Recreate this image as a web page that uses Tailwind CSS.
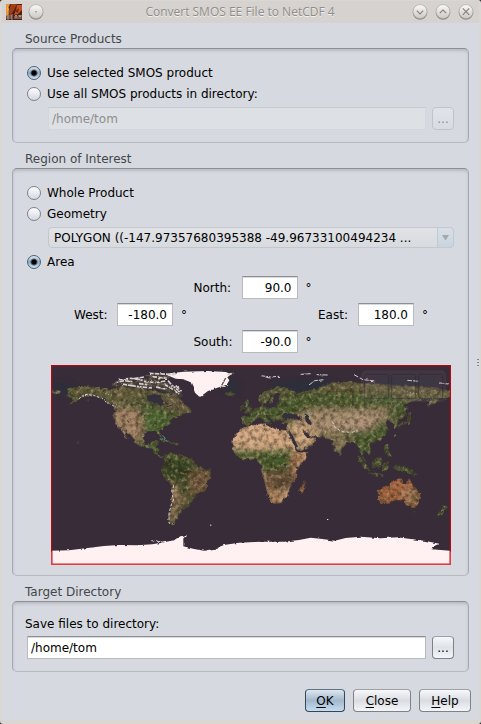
<!DOCTYPE html>
<html lang="en">
<head>
<meta charset="utf-8">
<meta name="viewport" content="width=device-width, initial-scale=1">
<title>Convert SMOS EE File to NetCDF 4</title>
<script src="https://cdn.jsdelivr.net/npm/@tailwindcss/browser@4"></script>
</head>
<body class="bg-[#2b2b30]">
<div class="relative flex min-h-screen flex-col overflow-hidden rounded-[3px] border-x-2 border-b-4 border-t border-[#dad6d2] bg-[#d6d9df] font-['DejaVu_Sans',sans-serif] text-[12px] leading-4 text-black">

  <!-- Title bar -->
  <header class="flex h-[22px] items-center bg-[#d6d2cf] pl-1 pr-[5px]">
    <svg class="size-4" viewBox="0 0 16 16" role="img" aria-label="BEAM">
      <rect width="16" height="16" fill="#4a2117"/>
      <path d="M0 0h4L2 5l1 5-3 2z" fill="#e39a32"/>
      <path d="M5 0h6L8 6 4 12 3 7z" fill="#a43d16"/>
      <path d="M11 1h5v5l-4 4-4 1 2-5z" fill="#c4511d"/>
      <path d="M1 2l2 3-1 4z" fill="#f1c36b"/>
      <path d="M9 7l4-3-1 5z" fill="#742a15"/>
      <path d="M1 15v-4h2v4zM1 13h2M5 15v-4h2M5 13h2M5 15h2M9 15v-3l1-1 1 1v3M9 13h2M13 15v-4l1 2 1-2v4" fill="none" stroke="#d3bcae" stroke-width=".7"/>
    </svg>
    <button aria-label="Window menu" class="ml-[6px]">
      <svg class="size-4" viewBox="0 0 16 16"><defs><linearGradient id="knob" x1="0" y1="0" x2="0" y2="1"><stop offset="0" stop-color="#fafaf9"/><stop offset="1" stop-color="#cbc8c5"/></linearGradient></defs><circle cx="8" cy="8.6" r="7.200" fill="#8d8a87"/><circle cx="8" cy="7.6" r="7" fill="url(#knob)" stroke="#a3a09d" stroke-width=".6"/><circle cx="8" cy="7.8" r=".8" fill="#8a8784"/></svg>
    </button>
    <h1 class="flex-1 pl-6 text-center font-['Open_Sans',sans-serif] text-[12px] text-[#8f8c89] [text-shadow:0_1px_0_#f2f0ee]">Convert SMOS EE File to NetCDF 4</h1>
    <div class="flex gap-[7px]">
      <button aria-label="Minimize"><svg class="size-4" viewBox="0 0 16 16"><circle cx="8" cy="8.6" r="7.200" fill="#8d8a87"/><circle cx="8" cy="7.6" r="7" fill="url(#knob)" stroke="#a3a09d" stroke-width=".6"/><path d="M4.800 6.6l3.200 3.200 3.200-3.200" fill="none" stroke="#85827f" stroke-width="1.2"/></svg></button>
      <button aria-label="Maximize"><svg class="size-4" viewBox="0 0 16 16"><circle cx="8" cy="8.6" r="7.200" fill="#8d8a87"/><circle cx="8" cy="7.6" r="7" fill="url(#knob)" stroke="#a3a09d" stroke-width=".6"/><path d="M4.800 9.200l3.200-3.200 3.200 3.200" fill="none" stroke="#85827f" stroke-width="1.2"/></svg></button>
      <button aria-label="Close window"><svg class="size-4" viewBox="0 0 16 16"><circle cx="8" cy="8.6" r="7.200" fill="#8d8a87"/><circle cx="8" cy="7.6" r="7" fill="url(#knob)" stroke="#a3a09d" stroke-width=".6"/><path d="M4.800 4.400l6.400 6.400M11.200 4.400l-6.400 6.400" fill="none" stroke="#85827f" stroke-width="1.2"/></svg></button>
    </div>
  </header>

  <main class="flex flex-col px-[10px] pt-2">
    <!-- Source products -->
    <h2 class="pl-[13px] text-[#43464b]">Source Products</h2>
    <section class="mt-px rounded-[5px] border border-x-[#a6a9ae] border-b-[#b6b9be] border-t-[#8c8f94] px-[14px] pb-3 pt-[13px] shadow-[inset_0_2px_3px_#b9bcc1]">
      <label class="flex h-[21px] items-center gap-[6px]"><input type="radio" name="source" checked class="size-[14px] appearance-none rounded-full border border-[#6d7580] bg-linear-to-b from-[#fdfdfe] to-[#d5d8df] checked:border-[#46607a] checked:bg-[radial-gradient(circle,#000_2px,transparent_4px),linear-gradient(#dfe9f2,#8fabc4_50%,#cfe2f2)]">Use selected SMOS product</label>
      <label class="flex h-[21px] items-center gap-[6px]"><input type="radio" name="source" class="size-[14px] appearance-none rounded-full border border-[#7b828c] bg-linear-to-b from-[#fdfdfe] to-[#d5d8df]">Use all SMOS products in directory:</label>
      <div class="mt-[3px] flex gap-[6px] pl-[21px]">
        <input type="text" aria-label="Source directory" disabled value="/home/tom" class="h-[23px] min-w-0 flex-1 border border-[#d3d6da] border-t-[#c6cacf] bg-[#dde0e4] px-[3px] text-[#8e8f91]">
        <button disabled aria-label="Browse source directory" class="h-[23px] w-[22px] rounded-[4px] border border-[#bfc4cc] bg-linear-to-b from-[#e1e3e8] to-[#d7dce2] text-[#8e8f91]">...</button>
      </div>
    </section>

    <!-- Region of interest -->
    <h2 class="mt-2 pl-[13px] text-[#43464b]">Region of Interest</h2>
    <section class="mt-px rounded-[5px] border border-x-[#a6a9ae] border-b-[#b6b9be] border-t-[#8c8f94] px-[14px] pb-[10px] pt-[13px] shadow-[inset_0_2px_3px_#b9bcc1]">
      <label class="flex h-[21px] items-center gap-[6px]"><input type="radio" name="region" class="size-[14px] appearance-none rounded-full border border-[#7b828c] bg-linear-to-b from-[#fdfdfe] to-[#d5d8df]">Whole Product</label>
      <label class="flex h-[21px] items-center gap-[6px]"><input type="radio" name="region" class="size-[14px] appearance-none rounded-full border border-[#7b828c] bg-linear-to-b from-[#fdfdfe] to-[#d5d8df]">Geometry</label>
      <div class="relative ml-[21px] mt-[3px]">
        <select aria-label="Geometry" class="block h-[21px] w-full appearance-none rounded-[4px] border border-[#c3c8cf] bg-linear-to-b from-[#e1e3e7] to-[#d7dade] pl-[5px] pr-5 text-black"><option>POLYGON ((-147.97357680395388 -49.96733100494234 ...</option></select>
        <span class="pointer-events-none absolute inset-y-0 right-0 flex w-[17px] items-center justify-center rounded-r-[4px] border border-[#c1c9d2] bg-linear-to-b from-[#d8dfe6] to-[#cbd4de]"><svg class="h-[6px] w-2" viewBox="0 0 8 6"><path d="M0 0h7L3.500 5.500z" fill="#a3a8ae"/></svg></span>
      </div>
      <label class="mt-[3px] flex h-[21px] items-center gap-[6px]"><input type="radio" name="region" checked class="size-[14px] appearance-none rounded-full border border-[#6d7580] bg-linear-to-b from-[#fdfdfe] to-[#d5d8df] checked:border-[#46607a] checked:bg-[radial-gradient(circle,#000_2px,transparent_4px),linear-gradient(#dfe9f2,#8fabc4_50%,#cfe2f2)]">Area</label>

      <div class="mt-1 flex flex-col gap-1 pl-6 pr-[3px]">
        <div class="flex items-center justify-center gap-2 pl-[3px]">
          <label for="north" class="w-10">North:</label>
          <input id="north" value="90.0" class="h-[23px] w-14 border border-[#b9bbbf] border-t-[#8c8f94] bg-white px-[5px] text-right shadow-[inset_0_1px_0_#d8d9db]"><span>°</span>
        </div>
        <div class="flex items-center justify-between px-[23px]">
          <div class="flex items-center gap-2"><label for="west" class="w-[35px]">West:</label><input id="west" value="-180.0" class="h-[23px] w-14 border border-[#b9bbbf] border-t-[#8c8f94] bg-white px-[5px] text-right shadow-[inset_0_1px_0_#d8d9db]"><span>°</span></div>
          <div class="flex items-center gap-2"><label for="east" class="w-8">East:</label><input id="east" value="180.0" class="h-[23px] w-14 border border-[#b9bbbf] border-t-[#8c8f94] bg-white px-[5px] text-right shadow-[inset_0_1px_0_#d8d9db]"><span>°</span></div>
        </div>
        <div class="flex items-center justify-center gap-2 pl-[3px]">
          <label for="south" class="w-10">South:</label>
          <input id="south" value="-90.0" class="h-[23px] w-14 border border-[#b9bbbf] border-t-[#8c8f94] bg-white px-[5px] text-right shadow-[inset_0_1px_0_#d8d9db]"><span>°</span>
        </div>
      </div>

      <!-- World map -->
      <div class="ml-6 mr-[3px] mt-3">
        <svg class="block aspect-2/1 w-full" viewBox="18 15 1200 600" role="img" aria-label="World map with selected area">
          <defs>
            <filter id="rough" x="0" y="0" width="1" height="1" filterUnits="objectBoundingBox" color-interpolation-filters="sRGB">
              <feTurbulence type="fractalNoise" baseFrequency=".08" numOctaves="3" seed="4" result="n"/>
              <feColorMatrix in="n" values="1 0 0 0 0  0 1 0 0 0  0 0 1 0 0  0 0 0 0 1" result="m"/>
              <feDisplacementMap in="SourceGraphic" in2="m" scale="14" xChannelSelector="R" yChannelSelector="G" result="d"/>
              <feTurbulence type="fractalNoise" baseFrequency=".07" numOctaves="4" seed="9"/>
              <feColorMatrix values="0 0 0 0 .15  0 0 0 0 .12  0 0 0 0 .07  1.300 0 0 0 -.5"/>
              <feComposite in2="d" operator="in" result="s"/>
              <feTurbulence type="fractalNoise" baseFrequency=".09" numOctaves="3" seed="21"/>
              <feColorMatrix values="0 0 0 0 .82  0 0 0 0 .7  0 0 0 0 .55  0 1.400 0 0 -.68"/>
              <feComposite in2="d" operator="in" result="h"/>
              <feMerge><feMergeNode in="d"/><feMergeNode in="s"/><feMergeNode in="h"/></feMerge>
            </filter>
            <filter id="edge" filterUnits="userSpaceOnUse" x="18" y="15" width="1200" height="600"><feTurbulence type="fractalNoise" baseFrequency=".08" numOctaves="2" seed="2"/><feColorMatrix values="1 0 0 0 0  0 1 0 0 0  0 0 1 0 0  0 0 0 0 1"/><feDisplacementMap in="SourceGraphic" scale="12" xChannelSelector="R" yChannelSelector="G" color-interpolation-filters="sRGB"/></filter>
            <filter id="soft"><feGaussianBlur stdDeviation="9"/></filter>
            <clipPath id="na"><path id="naP" d="M62 87L85 80 112 78 150 82 205 88 225 80 260 82 300 88 345 94 400 112 415 128 438 150 440 158 420 160 407 168 388 172 375 188 358 200 345 212 351 228 347 235 336 216 318 214 300 220 293 237 301 251 317 251 324 240 341 240 331 262 342 267 341 283 356 291 348 294 332 279 310 264 278 255 265 236 243 212 235 203 250 238 244 235 226 204 211 192 205 165 212 150 202 133 178 120 145 107 115 111 90 127 58 141 85 122 76 113 66 110 72 98z"/></clipPath>
            <clipPath id="sa"><path id="saP" d="M360 283L378 275 385 282 420 287 445 298 460 319 498 331 500 342 486 365 485 388 455 402 447 422 432 438 408 448 411 458 397 465 401 475 388 483 385 498 373 490 371 465 379 435 383 398 380 375 362 360 348 333 356 312z"/></clipPath>
            <clipPath id="af"><path id="afP" d="M587 205L615 196 652 190 672 200 700 208 727 211 744 249 759 277 787 277 785 292 755 326 752 360 733 380 727 410 710 427 681 432 668 402 659 366 650 336 648 315 630 297 596 299 575 287 562 269 563 238z"/></clipPath>
            <clipPath id="eu"><path id="euP" d="M590 170L610 170 618 163 606 155 630 149 647 138 652 128 662 144 690 141 703 124 714 122 700 120 706 96 690 102 686 118 675 133 668 127 650 130 638 122 642 107 670 88 700 78 730 86 760 100 785 91 815 88 840 75 875 68 915 64 950 70 985 70 1050 76 1110 80 1160 84 1218 93 1218 110 1185 120 1161 132 1152 145 1148 134 1162 116 1120 120 1090 128 1075 135 1087 140 1085 160 1073 175 1059 184 1057 203 1044 205 1043 186 1025 182 1021 192 1028 203 1024 222 1004 241 974 250 981 269 969 286 960 271 953 284 966 312 955 302 947 282 936 254 919 242 899 256 886 275 886 292 871 271 859 242 835 230 800 228 774 211 783 230 815 235 806 255 763 272 748 247 728 211 724 199 735 193 710 190 713 180 737 173 768 183 770 170 750 163 737 162 720 171 712 184 694 181 688 190 676 174 662 165 679 187 667 193 646 171 635 174 616 192 603 196 590 190z"/></clipPath>
            <clipPath id="au"><path id="auP" d="M1000 389L1021 381 1044 366 1064 354 1073 357 1070 365 1085 373 1092 354 1105 377 1124 396 1127 411 1117 436 1101 443 1083 435 1075 421 1048 420 1031 427 1003 430 997 405z"/></clipPath>
          </defs>
          <rect x="18" y="15" width="1200" height="600" fill="#372c38"/>
          <g fill="#1f3441" opacity=".45" filter="url(#soft)"><ellipse cx="50" cy="85" rx="40" ry="14"/><ellipse cx="780" cy="76" rx="100" ry="14"/><ellipse cx="1090" cy="65" rx="100" ry="8"/><ellipse cx="560" cy="80" rx="25" ry="16"/><ellipse cx="345" cy="123" rx="28" ry="18"/></g>

          <g filter="url(#rough)">
            <g clip-path="url(#na)"><use href="#naP" fill="#525a37"/><g filter="url(#soft)"><path d="M50 70H300V115L215 130 160 100 80 115z" fill="#655e3c"/><path d="M205 140L280 145 295 185 290 230 270 260 210 210z" fill="#a58567"/><path d="M295 145L390 150 370 190 340 215 300 210z" fill="#4c6733"/><path d="M300 90L440 120 430 158 360 150z" fill="#695d44"/><path d="M270 235L310 260 350 290 340 230z" fill="#4e6332"/></g></g>
            <g clip-path="url(#sa)"><use href="#saP" fill="#4b5430"/><g filter="url(#soft)"><path d="M353 295L430 300 450 335 420 370 365 355z" fill="#354322"/><path d="M450 325L500 330 490 390 440 410 430 350z" fill="#765a40"/><path d="M380 365L397 380 394 485 377 480z" fill="#ad8367"/><path d="M398 400L445 400 410 460z" fill="#66593b"/><path d="M370 278L440 288 430 300 370 292z" fill="#526235"/></g></g>
            <g clip-path="url(#af)"><use href="#afP" fill="#d8ac86"/><g filter="url(#soft)"><path d="M555 270L640 273 740 270 755 290 740 330 655 340 635 300 560 305z" fill="#435a2b"/><path d="M655 335L750 325 755 370 735 395 665 385z" fill="#664f38"/><path d="M655 370L690 390 720 400 710 440 665 440z" fill="#aa805c"/><path d="M735 285L795 270 770 320 740 345z" fill="#a77957"/></g></g>
            <g clip-path="url(#eu)"><use href="#euP" fill="#5c5f3c"/><g filter="url(#soft)"><path d="M590 145L670 140 750 100 1030 95 1070 115 1050 145 800 140 760 165 600 190z" fill="#485c2f"/><path d="M750 70L1218 70 1218 110 1050 105 850 92z" fill="#696040"/><path d="M770 155L850 145 920 150 1030 145 1020 180 930 195 860 225 790 225 740 190z" fill="#a88e70"/><path d="M895 170L1000 160 985 205 910 215 865 195z" fill="#b2957b"/><path d="M720 195L785 195 825 235 765 280z" fill="#d8ae85"/><path d="M855 225L910 225 900 260 885 292z" fill="#93805b"/><path d="M930 220L1035 185 1020 240 975 270 955 290 930 245z" fill="#4d6131"/><path d="M1030 115L1090 130 1080 170 1030 160z" fill="#4d6033"/></g></g>
            <g clip-path="url(#au)"><use href="#auP" fill="#a6643f"/><g filter="url(#soft)"><path d="M1095 370L1130 400 1110 440 1080 430 1100 405z" fill="#776040"/><path d="M1075 385L1097 395 1092 420 1070 410z" fill="#c4936d"/><path d="M1000 420L1040 425 1000 440z" fill="#67633c"/></g></g>
            <g fill="#4c5632">
              <path d="M600 121l12 1-4 12 13 12-2 10-20 1 8-9-9-6 5-8zM586 138l11-3-1 14-11 3zM340 237l20-2 22 11 20 5-5 5-27-9zM540 99l18-4 14 5-10 8-16-3z"/>
              <path d="M935 289l10 4 25 28 4 14-10-5-17-23zM981 307l14-11 13-6 5 12-8 21-21-1-4-9zM1015 310l20-4-12 8 8 7-3 11-10-4 1 10-8-7zM1042 320l18-4 25 6 20 9 10 13-20-1-20-8-21-7zM970 337l25 3 22 7-3 3-44-9zM1020 253l8 2 3 20 10 15-10 1-14-19zM1092 153l8 17-11 20-16 4-13 9 3-9 18-8 9-16zM1194 435l13 4-6 10-20 20-7-3 18-16zM1104 451l8 3-4 6-5-3zM1049 223l5 1-3 8z"/>
              <path d="M776 362l9 6-10 29-9 2-3-10z" fill="#80593b"/><path d="M18 90l28 3-6 8-22-2z" fill="#766c55"/><path d="M90 240l8 5 4 6zM125 120l10-3-8 8z"/>
              <path d="M205 78l20-14 40 0 30-6 30-12 40-2 10 8-35 10 35 10 20 14 22 20-18 6-30-14-44-16-36 4z" fill="#4c4640"/>
            </g>
          </g>

          <!-- Inland seas and gulfs -->
          <g fill="#33303b" filter="url(#edge)"><path d="M308 112l22-7 20 4 9 24-10 10-14-12-24-6zM712 174l8-12 16 1 16 8-10 6-18-3zM782 164l10 3 3 14 9 12-8 6-11-12zM735 213l12 18 15 32-5 2-17-26zM776 210l14 17 9 4-7 5-11-9z"/><path d="M720 314l8 2-2 6-7-2z"/></g>
          <g stroke="#302d39" stroke-width="3" fill="none"><path d="M664 166l21 21M680 105l-12 25M365 140l15-4M247 181l5 7"/></g>

          <!-- Snow and ice -->
          <g fill="#fff1f1" filter="url(#edge)">
            <path d="M375 43L420 38 490 36 545 39 562 46 550 55 556 64 548 77 520 86 492 96 476 108 466 113 453 101 447 85 440 70 418 61 395 59 370 49z"/>
            <path d="M18 575L75 574 125 568 180 561 225 558 280 559 325 556 360 550 390 544 405 534 430 527 418 538 418 562 450 570 480 575 512 569 540 558 585 551 650 548 720 548 765 543 800 536 835 540 872 545 905 537 950 533 1010 538 1060 535 1100 540 1145 546 1186 554 1165 563 1163 571 1218 575V615H18z"/>
          </g>
          <path d="M18 590H1218V615H18z" fill="#fff1f1"/>
          <g fill="none" stroke="#d9cfcd" stroke-width="5" stroke-dasharray="14 3" filter="url(#edge)">
            <path d="M210 72l30-7 25 3M222 62l40-4 34 6M270 59l30-5M315 43l63 3 20-4M300 67l36 4 28-5M325 53l44 5M262 80l32 4 30 3M372 65l13 15 22 17M360 76l27 15 18 14M336 84l28 6M395 80l15 13M550 47l18-4M235 75l28 5M285 74l25 3"/>
            <path d="M650 50l30 4 25-2M770 46l30-2M818 47l30 1M795 78l17-13 28-3M930 47l27 15 37 4M1090 64l35 3M1185 72l28 3" stroke-width="3"/>
            <path d="M104 120l18-14 27 3 29 11 22 17M204 138l14 8" stroke-width="3" stroke-dasharray="8 4"/>
            <path d="M865 188l8 17 20 13 28 2 20-5M388 378l-3 48-10 36 0 30 12 3M322 545l35 4" stroke-width="3" stroke-dasharray="9 5"/>
          </g>
          <g fill="none" stroke="#5f5948" stroke-width="4" filter="url(#edge)"><path d="M205 76l15-9M305 50l20-1M545 57l-12 22"/></g>
          <g fill="none" stroke="#d8cbc2" stroke-width="2" stroke-dasharray="3 6"><path d="M180 101l25 5M205 130l30 14M1078 93l38 9M1085 105l26-6M983 130l25-6M1148 121l16-7-11 20M1180 464l8-4M640 162l14-4"/></g>
          <path d="M353 226l7 8-2 6m5 0l5 5m-24-8l9 1M787 162l7 4" fill="none" stroke="#4c8d95" stroke-width="3"/>
          <g fill="#e9e1df"><rect x="495" y="494" width="4" height="3"/><rect x="846" y="477" width="4" height="3"/></g>

          <!-- Map tool overlay -->
          <rect x="948" y="31" width="255" height="95" rx="15" fill="#9b98a0" fill-opacity=".1"/>
          <g fill="none" stroke="#29232b" stroke-opacity=".4" stroke-width="3"><rect x="959" y="43" width="72" height="73" rx="4"/><rect x="1040" y="43" width="72" height="73" rx="4"/><rect x="1121" y="43" width="72" height="73" rx="4"/></g>

          <!-- Selected area -->
          <rect x="20" y="17" width="1196" height="596" fill="none" stroke="#aa0a12" stroke-width="4"/>
          <path d="M20 575V613H1216V575" fill="none" stroke="#e43b42" stroke-width="4"/>
        </svg>
      </div>
    </section>

    <!-- Target directory -->
    <h2 class="mt-2 pl-[13px] text-[#43464b]">Target Directory</h2>
    <section class="mt-px rounded-[5px] border border-x-[#a6a9ae] border-b-[#b6b9be] border-t-[#8c8f94] px-[14px] pb-3 pt-[14px] shadow-[inset_0_2px_3px_#b9bcc1]">
      <label for="target" class="-ml-[2px] block">Save files to directory:</label>
      <div class="mt-1 flex gap-[6px]">
        <input id="target" type="text" value="/home/tom" class="h-[23px] min-w-0 flex-1 border border-[#b9bbbf] border-t-[#8c8f94] bg-white px-[3px] shadow-[inset_0_1px_0_#d8d9db]">
        <button aria-label="Browse target directory" class="h-[23px] w-[22px] rounded-[4px] border border-[#7c8289] border-t-[#9da1a7] bg-linear-to-b from-[#f7f8fa] via-[#dfe2e6] to-[#f4f6f9]">...</button>
      </div>
    </section>
  </main>

  <footer class="mt-[17px] flex justify-end gap-2 pb-[7px] pr-2">
    <button class="h-[23px] w-10 rounded-[4px] border border-[#34475a] border-t-[#5d7387] bg-linear-to-b from-[#dfe7ef] via-[#a3b8cc] to-[#c6ddf0]"><span class="underline underline-offset-2">O</span>K</button>
    <button class="h-[23px] w-[58px] rounded-[4px] border border-[#7c8289] border-t-[#9da1a7] bg-linear-to-b from-[#f7f8fa] via-[#d9dce1] to-[#f4f6f9]"><span class="underline underline-offset-2">C</span>lose</button>
    <button class="h-[23px] w-[52px] rounded-[4px] border border-[#7c8289] border-t-[#9da1a7] bg-linear-to-b from-[#f7f8fa] via-[#d9dce1] to-[#f4f6f9]"><span class="underline underline-offset-2">H</span>elp</button>
  </footer>

  <!-- Splitter grip on the window edge -->
  <div class="absolute right-0 top-[358px] h-[7px] w-[2px] bg-[repeating-linear-gradient(#85888c_0_1px,#d6d9df_1px_3px)]"></div>
</div>
</body>
</html>
